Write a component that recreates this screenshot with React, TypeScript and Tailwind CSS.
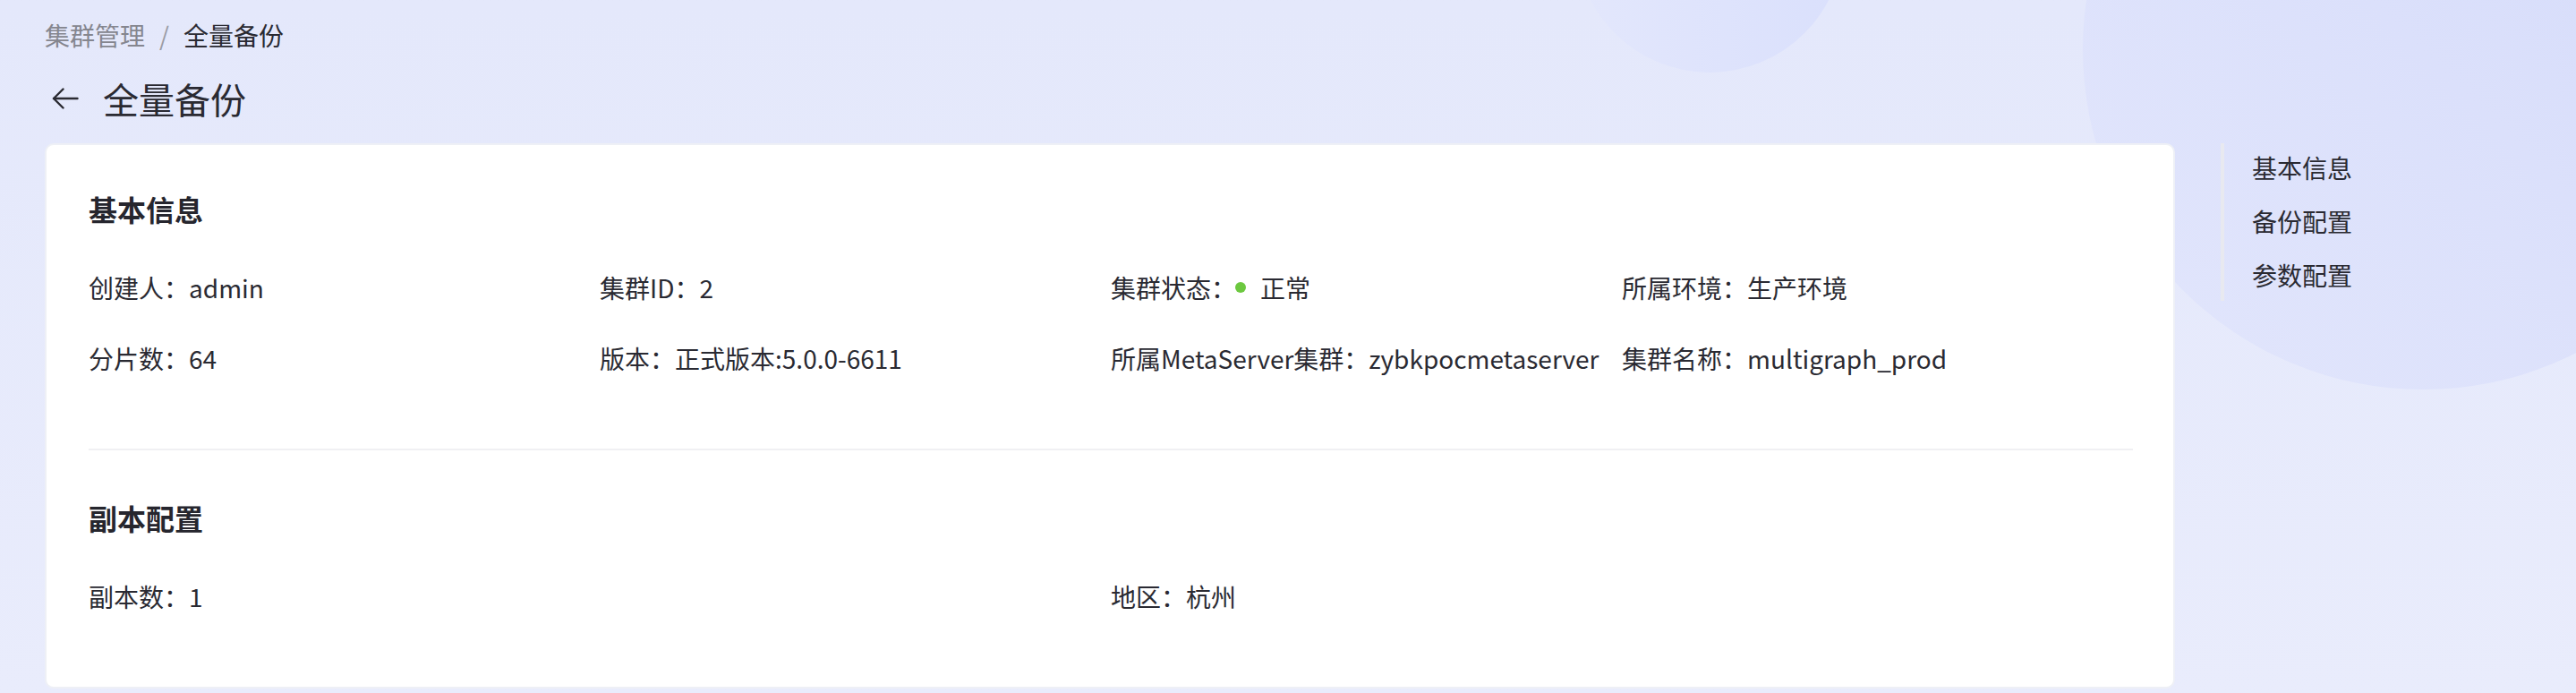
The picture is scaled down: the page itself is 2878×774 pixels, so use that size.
import React from 'react';

const FONT = { fontFamily: '"Noto Sans CJK SC", "Noto Sans", sans-serif' };

const basicInfo = [
  { label: '创建人', value: 'admin' },
  { label: '集群ID', value: '2' },
  { label: '集群状态', value: '正常', status: true },
  { label: '所属环境', value: '生产环境' },
  { label: '分片数', value: '64' },
  { label: '版本', value: '正式版本:5.0.0-6611' },
  { label: '所属MetaServer集群', value: 'zybkpocmetaserver' },
  { label: '集群名称', value: 'multigraph_prod' },
];

const replicaInfo = [
  { label: '副本数', value: '1' },
  { label: '地区', value: '杭州' },
];

type Item = { label: string; value: string; status?: boolean };

const Field = ({ item }: { item: Item }) => (
  <div className="flex items-center h-[44px] mb-[35px] text-[28px] leading-[44px] text-[#2a2a32] whitespace-nowrap">
    <span>{item.label}：</span>
    {item.status && <span className="w-[12px] h-[12px] rounded-full bg-[#6cc83f] mr-[16px] -ml-[1px]" />}
    <span>{item.value}</span>
  </div>
);

const App = () => {
  return (
    <div className="relative w-full h-[774px] overflow-hidden bg-gradient-to-b from-[#e4e8fb] to-[#e9ecfc]" style={FONT}>
      {/* background circles */}
      <div className="absolute left-[1760px] top-[-219px] w-[300px] h-[300px] rounded-full bg-gradient-to-r from-[#e3e7fc] to-[#dae0fc]" />
      <div className="absolute left-[2327px] top-[-325px] w-[760px] h-[760px] rounded-full bg-gradient-to-bl from-[#d3dafa] via-[#dbe0fb] to-[#e2e6fc]" />

      <div className="relative pl-[50px] pt-[17px]">
        {/* Breadcrumb */}
        <div className="flex items-center h-[44px] text-[28px] leading-[44px]">
          <span className="text-[#85868f]">集群管理</span>
          <span className="mx-[16px] text-[#9a9ba4]">/</span>
          <span className="text-[#2a2a32]">全量备份</span>
        </div>

        {/* Title */}
        <div className="flex items-center h-[56px] mt-[21px]">
          <svg width="30" height="24" viewBox="0 0 30 24" fill="none" stroke="#2a2a32" strokeWidth="2.4" strokeLinecap="round" strokeLinejoin="round" className="ml-[8px]">
            <path d="M28.5 12H2" />
            <path d="M12.5 1.5L2 12l10.5 10.5" />
          </svg>
          <h1 className="ml-[27px] text-[40px] leading-[56px] font-normal text-[#2a2a32]">全量备份</h1>
        </div>

        <div className="flex mt-[22px] gap-[51px]">
          {/* Card */}
          <div className="w-[2380px] shrink-0 h-[609px] bg-white rounded-[10px] border-2 border-[#eef0f6] pt-[47px] pl-[47px] pr-[45px]">
            <h2 className="text-[32px] leading-[48px] font-semibold text-[#26262e]">基本信息</h2>
            <div className="grid grid-cols-4 mt-[42px]">
              {basicInfo.map((item) => (
                <Field key={item.label} item={item} />
              ))}
            </div>
            <div className="h-[2px] bg-[#f0f0f3] mt-[44px]" />
            <h2 className="mt-[51px] text-[32px] leading-[48px] font-semibold text-[#26262e]">副本配置</h2>
            <div className="grid grid-cols-2 mt-[42px]">
              {replicaInfo.map((item) => (
                <Field key={item.label} item={item} />
              ))}
            </div>
          </div>

          {/* Anchor nav */}
          <nav className="h-[176px] border-l-4 border-[#e8e9f0] pl-[31px] pt-[5px] flex flex-col gap-[16px] text-[28px] leading-[44px] text-[#2a2a32]">
            <a>基本信息</a>
            <a>备份配置</a>
            <a>参数配置</a>
          </nav>
        </div>
      </div>
    </div>
  );
};

export default App;
